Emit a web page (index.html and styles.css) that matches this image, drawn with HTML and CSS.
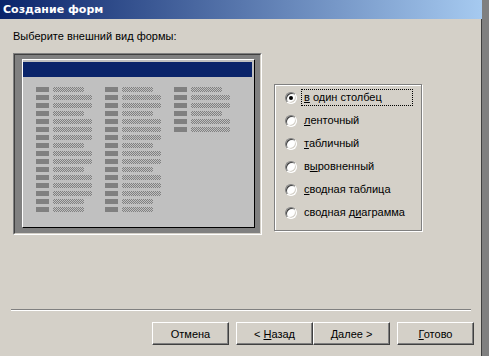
FILE: index.html
```html
<!DOCTYPE html>
<html>
<head>
  <title>Создание форм</title>
  <meta charset="UTF-8">
  <link rel="stylesheet" href="styles.css">
</head>
<body>
  <div class="window">
    <div class="titlebar">Создание форм</div>

    <div class="prompt">Выберите внешний вид формы:</div>

    <div class="main">
      <div class="preview">
        <div class="well">
          <div class="sheet">
            <div class="caption"></div>
            <div class="columns">
              <div class="col">
                <div class="row"><span class="lbl"></span><span class="fld"></span></div>
                <div class="row"><span class="lbl"></span><span class="fld long"></span></div>
                <div class="row"><span class="lbl"></span><span class="fld long"></span></div>
                <div class="row"><span class="lbl"></span><span class="fld"></span></div>
                <div class="row"><span class="lbl"></span><span class="fld long"></span></div>
                <div class="row"><span class="lbl"></span><span class="fld long"></span></div>
                <div class="row"><span class="lbl"></span><span class="fld long"></span></div>
                <div class="row"><span class="lbl"></span><span class="fld"></span></div>
                <div class="row"><span class="lbl"></span><span class="fld long"></span></div>
                <div class="row"><span class="lbl"></span><span class="fld long"></span></div>
                <div class="row"><span class="lbl"></span><span class="fld"></span></div>
                <div class="row"><span class="lbl"></span><span class="fld long"></span></div>
                <div class="row"><span class="lbl"></span><span class="fld long"></span></div>
                <div class="row"><span class="lbl"></span><span class="fld long"></span></div>
                <div class="row"><span class="lbl"></span><span class="fld"></span></div>
                <div class="row"><span class="lbl"></span><span class="fld"></span></div>
              </div>
              <div class="col">
                <div class="row"><span class="lbl"></span><span class="fld"></span></div>
                <div class="row"><span class="lbl"></span><span class="fld long"></span></div>
                <div class="row"><span class="lbl"></span><span class="fld long"></span></div>
                <div class="row"><span class="lbl"></span><span class="fld"></span></div>
                <div class="row"><span class="lbl"></span><span class="fld long"></span></div>
                <div class="row"><span class="lbl"></span><span class="fld long"></span></div>
                <div class="row"><span class="lbl"></span><span class="fld long"></span></div>
                <div class="row"><span class="lbl"></span><span class="fld"></span></div>
                <div class="row"><span class="lbl"></span><span class="fld long"></span></div>
                <div class="row"><span class="lbl"></span><span class="fld long"></span></div>
                <div class="row"><span class="lbl"></span><span class="fld"></span></div>
                <div class="row"><span class="lbl"></span><span class="fld long"></span></div>
                <div class="row"><span class="lbl"></span><span class="fld long"></span></div>
                <div class="row"><span class="lbl"></span><span class="fld long"></span></div>
                <div class="row"><span class="lbl"></span><span class="fld"></span></div>
                <div class="row"><span class="lbl"></span><span class="fld"></span></div>
              </div>
              <div class="col">
                <div class="row"><span class="lbl"></span><span class="fld"></span></div>
                <div class="row"><span class="lbl"></span><span class="fld long"></span></div>
                <div class="row"><span class="lbl"></span><span class="fld long"></span></div>
                <div class="row"><span class="lbl"></span><span class="fld"></span></div>
                <div class="row"><span class="lbl"></span><span class="fld long"></span></div>
                <div class="row"><span class="lbl"></span><span class="fld long"></span></div>
              </div>
            </div>
          </div>
        </div>
      </div>

      <div class="options">
        <div class="option"><span class="radio checked"></span><span class="text focus"><u>в</u> один столбец</span></div>
        <div class="option"><span class="radio"></span><span class="text"><u>л</u>енточный</span></div>
        <div class="option"><span class="radio"></span><span class="text"><u>т</u>абличный</span></div>
        <div class="option"><span class="radio"></span><span class="text">в<u>ы</u>ровненный</span></div>
        <div class="option"><span class="radio"></span><span class="text"><u>с</u>водная таблица</span></div>
        <div class="option"><span class="radio"></span><span class="text">сводная д<u>и</u>аграмма</span></div>
      </div>
    </div>

    <div class="separator"></div>

    <div class="buttons">
      <button type="button">Отмена</button>
      <button type="button" class="joined">&lt; <u>Н</u>азад</button>
      <button type="button"><u>Д</u>алее &gt;</button>
      <button type="button" class="last"><u>Г</u>отово</button>
    </div>
  </div>
</body>
</html>
```

FILE: styles.css
```css
/* Reset */
* {
  margin: 0;
  padding: 0;
  box-sizing: border-box;
}

body {
  width: 489px;
  height: 356px;
  overflow: hidden;
  background-color: #d4d0c8;
  font-family: 'Liberation Sans', Arial, sans-serif;
  font-size: 11px;
  color: #000;
}

/* Window */
.window {
  width: 489px;
  height: 356px;
  border-right: 7px solid #808080;
  box-shadow: inset -1px 0 0 #404040;
}

.titlebar {
  height: 19px;
  padding-left: 3px;
  line-height: 19px;
  font-family: 'DejaVu Sans', sans-serif;
  font-weight: 700;
  font-size: 11px;
  color: #fff;
  background: linear-gradient(to right, #0a246a, #a6caf0);
}

.prompt {
  margin: 10px 0 0 13px;
  line-height: 14px;
}

.main {
  display: flex;
  margin-top: 10px;
  padding-left: 13px;
}

/* Layout preview */
.preview {
  width: 249px;
  height: 182px;
  border: 1px solid;
  border-color: #808080 #fff #fff #808080;
}

.well {
  height: 100%;
  padding: 4px 5px 5px 7px;
  background-color: #808080;
  border: 1px solid;
  border-color: #404040 #d4d0c8 #d4d0c8 #404040;
}

.sheet {
  height: 100%;
  padding: 2px 2px 0 0;
  background-color: #c0c0c0;
  border: 1px solid;
  border-color: #fff #000 #000 #fff;
}

.caption {
  height: 15px;
  background-color: #0a246a;
}

.columns {
  display: flex;
  gap: 13px;
  margin-top: 10px;
  padding-left: 13px;
}

.col {
  display: flex;
  flex-direction: column;
  gap: 3px;
  width: 56px;
}

.row {
  display: flex;
  gap: 4px;
  height: 5px;
}

.lbl {
  width: 13px;
  background-color: #808080;
}

.fld {
  width: 31px;
  background: repeating-conic-gradient(#808080 0 25%, #c0c0c0 0 50%) 0 0 / 2px 2px;
}

.fld.long {
  width: 39px;
}

/* Options group */
.options {
  width: 148px;
  height: 147px;
  margin: 31px 0 0 12px;
  padding: 4px 0 0 10px;
  display: flex;
  flex-direction: column;
  gap: 6px;
  border: 1px solid #808080;
  box-shadow: inset 1px 1px 0 #fff, 1px 1px 0 #fff;
}

.option {
  display: flex;
  align-items: center;
  height: 17px;
}

.radio {
  position: relative;
  width: 12px;
  height: 12px;
  border-radius: 50%;
  background-color: #fff;
  border: 1px solid;
  border-color: #808080 #fff #fff #808080;
  box-shadow: inset 1px 1px 0 #404040, inset -1px -1px 0 #d4d0c8;
}

.radio.checked::after {
  content: '';
  position: absolute;
  left: 3px;
  top: 3px;
  width: 4px;
  height: 4px;
  border-radius: 50%;
  background-color: #000;
}

.text {
  width: 112px;
  height: 17px;
  margin-left: 4px;
  padding-left: 2px;
  line-height: 15px;
  border: 1px dotted transparent;
}

.text.focus {
  border-color: #000;
}

/* Footer */
.separator {
  width: 460px;
  margin: 74px 0 0 11px;
  border-top: 1px solid #808080;
  border-bottom: 1px solid #fff;
}

.buttons {
  display: flex;
  margin-top: 11px;
  padding-left: 152px;
}

button {
  width: 77px;
  height: 23px;
  margin-right: 7px;
  font-family: 'Liberation Sans', Arial, sans-serif;
  font-size: 11px;
  color: #000;
  background-color: #d4d0c8;
  border: 1px solid;
  border-color: #fff #404040 #404040 #fff;
  box-shadow: inset -1px -1px 0 #808080;
}

button.joined {
  margin-right: 0;
}
```
